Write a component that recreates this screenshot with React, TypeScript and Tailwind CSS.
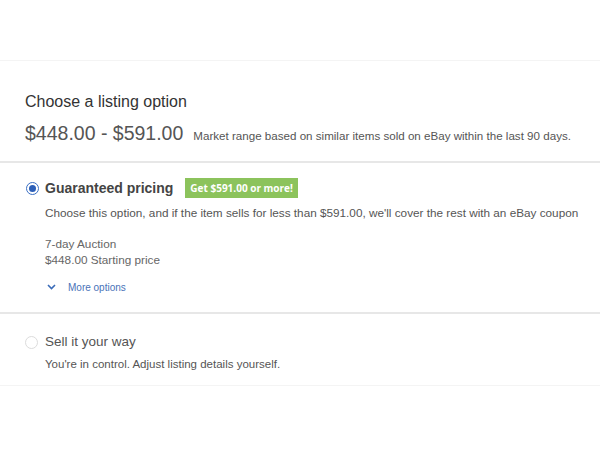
import React from "react";

export default function App() {
  return (
    <div className="w-[600px] h-[450px] bg-white pt-[60px] font-['Liberation_Sans',Arial,sans-serif] text-[#444]">
      <div className="border-t border-b border-[#f4f4f4]">
        {/* header */}
        <div className="px-[25px] pt-[31px] pb-[16px]">
          <h2 className="text-[16px] leading-5 text-[#333]">Choose a listing option</h2>
          <div className="mt-[9px] flex items-baseline gap-[10px]">
            <span className="text-[19.5px] leading-6 text-[#555]">$448.00 - $591.00</span>
            <span className="text-[11.6px] text-[#555]">
              Market range based on similar items sold on eBay within the last 90 days.
            </span>
          </div>
        </div>

        <div className="h-[2px] bg-[#e7e7e7]" />

        {/* guaranteed */}
        <div className="pl-[26px] pr-4 pt-[15px] pb-[17px]">
          <div className="flex items-center h-5">
            <span className="w-[13px] h-[13px] rounded-full border border-[#3a6fc4] flex items-center justify-center">
              <span className="w-[7px] h-[7px] rounded-full bg-[#2c5fb8]" />
            </span>
            <span className="ml-[6px] text-[14px] font-bold text-[#444]">Guaranteed pricing</span>
            <span className="ml-[12px] h-5 px-[5px] bg-[#8cc35c] text-white text-[10px] font-bold font-['Open_Sans',sans-serif] flex items-center">
              Get $591.00 or more!
            </span>
          </div>
          <div className="ml-[19px]">
            <p className="mt-[7px] text-[11.75px] leading-4 text-[#555]">
              Choose this option, and if the item sells for less than $591.00, we'll cover the rest with an eBay coupon
            </p>
            <p className="mt-[15px] text-[11.75px] leading-4 text-[#666]">7-day Auction</p>
            <p className="text-[11.75px] leading-4 text-[#666]">$448.00 Starting price</p>
            <div className="mt-[11px] flex items-center gap-[12px] h-4">
              <svg width="9" height="6" viewBox="0 0 9 6" className="ml-[2px]">
                <path d="M1 1l3.5 3.5L8 1" fill="none" stroke="#3a6bb8" strokeWidth="1.6" />
              </svg>
              <span className="text-[10px] text-[#4a72b8]">More options</span>
            </div>
          </div>
        </div>

        <div className="h-[2px] bg-[#e7e7e7]" />

        {/* sell it your way */}
        <div className="pl-[25px] pt-[19px] pb-[13px]">
          <div className="flex items-center h-[18px]">
            <span className="w-[13px] h-[13px] rounded-full border border-[#dcdcdc]" />
            <span className="ml-[7px] text-[13.5px] text-[#555]">Sell it your way</span>
          </div>
          <p className="ml-[20px] mt-[5px] text-[11.5px] leading-4 text-[#555]">
            You're in control. Adjust listing details yourself.
          </p>
        </div>
      </div>
    </div>
  );
}
